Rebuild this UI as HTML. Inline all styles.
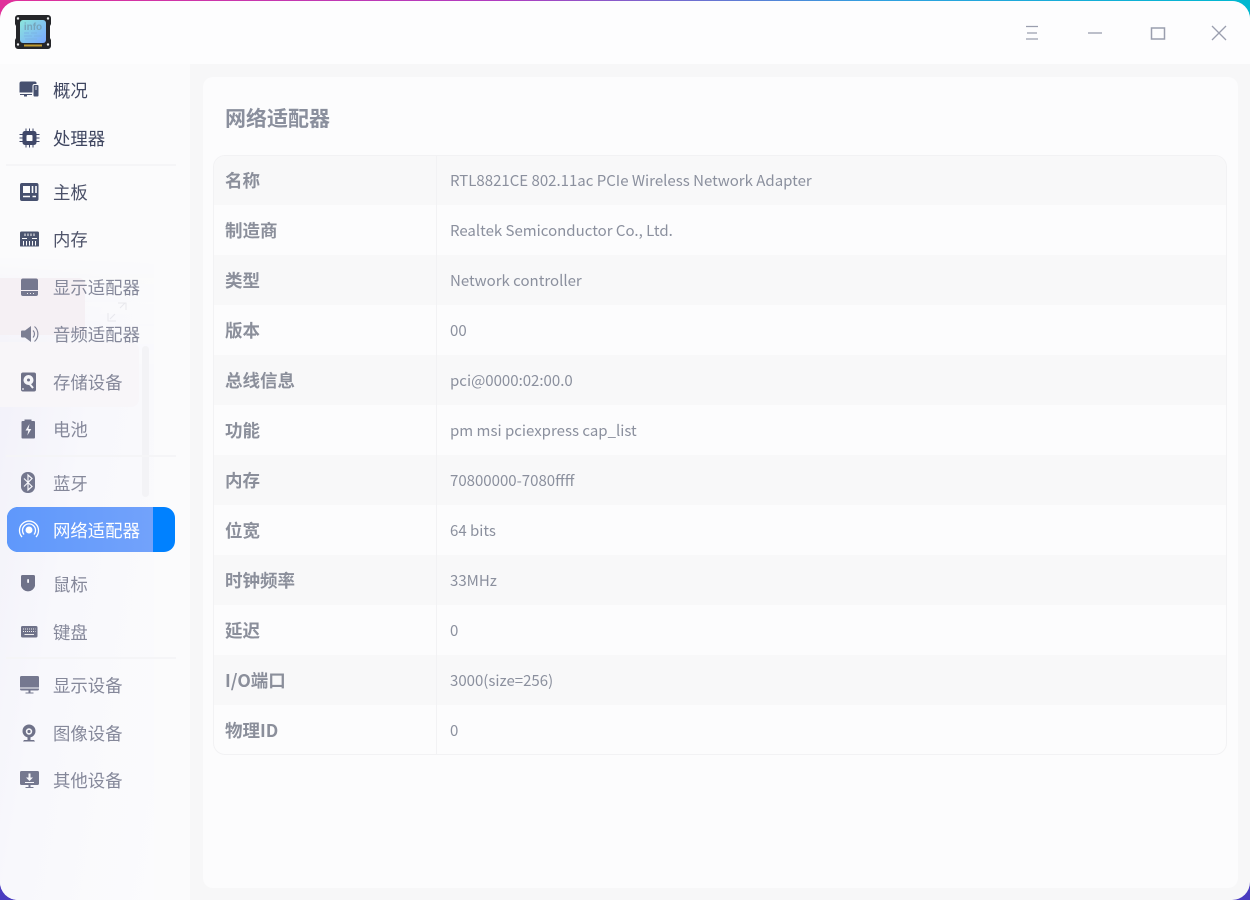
<!DOCTYPE html>
<html><head><meta charset="utf-8">
<style>
*{box-sizing:border-box;margin:0;padding:0}
html,body{width:1250px;height:900px;overflow:hidden;font-family:"Noto Sans CJK SC","Liberation Sans",sans-serif}
#bg{position:absolute;left:0;top:0;width:1250px;height:900px;background:linear-gradient(90deg,#e0309a 0%,#b03cc0 40%,#30a0e0 70%,#00b8d0 100%)}
#bg2{position:absolute;left:0;top:450px;width:1250px;height:450px;background:#4a3cc0}
#win{position:absolute;left:0;top:1px;width:1250px;height:899px;border-radius:18px;overflow:hidden;background:#f7f7f8}
#title{position:absolute;left:0;top:0;width:1250px;height:63px;background:#fdfdfe}
#side{position:absolute;left:0;top:63px;width:190px;height:836px;background:#fbfbfc}
#tint{position:absolute;left:0;top:190px;width:154px;height:646px;background:linear-gradient(100deg,#f1f0f9 0%,#f8f8fc 45%,#fbfbfd 100%);-webkit-mask-image:linear-gradient(180deg,transparent 0,#000 120px);mask-image:linear-gradient(180deg,transparent 0,#000 120px)}
#p1{position:absolute;left:0;top:214px;width:85px;height:57px;background:#f5f0f4;border-radius:0 6px 0 0}
#p2{position:absolute;left:0;top:278px;width:139px;height:65px;background:#f8f6f9;border-radius:0 8px 8px 0}
.nav{position:absolute;left:53px;font-size:17.4px;line-height:24px;white-space:nowrap;margin-top:1px}
.ic{position:absolute;left:18px;width:22px;height:22px}
.d{position:absolute;left:6px;width:170px;height:2px;background:#f5f5f7}
#sel{position:absolute;left:7px;top:507px;width:168px;height:45px;border-radius:11px;background:#0081ff;overflow:hidden}
#sel div{position:absolute;left:0;top:0;width:146px;height:45px;background:linear-gradient(90deg,#5f98fb,#72a2fb)}
#scroll{position:absolute;left:142px;top:345px;width:7px;height:151px;border-radius:4px;background:#f3f3f6}
#card{position:absolute;left:203px;top:76px;width:1035px;height:811px;border-radius:10px;background:#fcfcfd}
#h{position:absolute;left:225px;top:104px;font-size:21px;line-height:29px;font-weight:700;color:#8a8f9d}
#tb{position:absolute;left:213px;top:155px;width:1014px;height:600px;border:1px solid #f2f2f4;border-radius:12px;overflow:hidden;background:#fcfcfd}
.r{position:absolute;left:0;width:1012px;height:50px;margin-top:-1px}
.r.o{background:#f8f8f9}
.k{position:absolute;left:11px;top:13px;font-size:17.5px;line-height:26px;font-weight:700;color:#8b8f9b}
.v{position:absolute;left:236px;top:13px;font-size:15px;line-height:25px;color:#8b909e;white-space:nowrap}
#col{position:absolute;left:222px;top:0;width:1px;height:598px;background:#f2f2f4}
svg{display:block;overflow:visible}
</style></head><body>
<div id="bg"></div><div id="bg2"></div>
<div id="win">
 <div id="title"></div>
 <div id="side"><div id="tint"></div><div id="p1"></div><div id="p2"></div></div>
 <div id="scroll"></div>
 <svg style="position:absolute;left:107px;top:301px" width="20" height="20" fill="none" stroke="#e8e8ed" stroke-width="1"><path d="M11 1h8v7M13 6l5-5M1 11v8h8M3 17l5-5"/></svg>
 <div id="card"></div>
</div>

<!-- logo -->
<svg style="position:absolute;left:15px;top:15px" width="36" height="34">
 <defs><linearGradient id="lg" x1="0" y1="0" x2="1" y2="1"><stop offset="0" stop-color="#8ce6dc"/><stop offset="1" stop-color="#78a6ff"/></linearGradient></defs>
 <path d="M3 0h30a3 3 0 0 1 3 3v6l-1 2v12l1 2v6a3 3 0 0 1-3 3H3a3 3 0 0 1-3-3v-6l1-2V11L0 9V3a3 3 0 0 1 3-3z" fill="#25262a"/>
 <rect x="5" y="5" width="26" height="23" rx="3" fill="url(#lg)"/>
 <circle cx="3" cy="3.500" r="1.200" fill="#eee"/><circle cx="33" cy="3.500" r="1.200" fill="#eee"/><circle cx="3" cy="29.500" r="1.200" fill="#eee"/><circle cx="33" cy="29.500" r="1.200" fill="#eee"/>
 <rect x="9" y="29.500" width="18" height="2" fill="#c09a30"/>
 <text x="18" y="15" text-anchor="middle" font-size="10" font-weight="700" fill="#76a5bb" font-family="Liberation Sans,sans-serif">info</text>
 <path d="M9 18h5M16 18h6M9 21h8M19 21h8M10 24h12" stroke="#7ab4e4" stroke-width="1"/>
</svg>

<!-- window buttons -->
<svg style="position:absolute;left:1020px;top:20px" width="210" height="26" fill="none" stroke="#9a9eae" stroke-width="1.300">
 <path d="M6 6.500h12M7 13h10M6 19h12"/>
 <path d="M68 13h14"/>
 <rect x="131.500" y="8" width="13" height="11" stroke-width="1.500"/>
 <path d="M192 6l14 14M206 6l-14 14"/>
</svg>

<!-- nav -->
<div class="nav" style="top:78px;color:#3f4660">概况</div>
<div class="nav" style="top:126px;color:#3f4660">处理器</div>
<div class="nav" style="top:180px;color:#4a5068">主板</div>
<div class="nav" style="top:227px;color:#4f546a">内存</div>
<div class="nav" style="top:275px;color:#85889a">显示适配器</div>
<div class="nav" style="top:322px;color:#85889a">音频适配器</div>
<div class="nav" style="top:370px;color:#85889a">存储设备</div>
<div class="nav" style="top:417px;color:#85889a">电池</div>
<div class="nav" style="top:471px;color:#85889a">蓝牙</div>
<div class="nav" style="top:572px;color:#85889a">鼠标</div>
<div class="nav" style="top:620px;color:#85889a">键盘</div>
<div class="nav" style="top:673px;color:#85889a">显示设备</div>
<div class="nav" style="top:721px;color:#85889a">图像设备</div>
<div class="nav" style="top:768px;color:#85889a">其他设备</div>

<div class="d" style="top:164px"></div>
<div class="d" style="top:455px"></div>
<div class="d" style="top:657px"></div>

<div id="sel"><div></div></div>
<div class="nav" style="top:518px;color:#fff;z-index:3">网络适配器</div>

<!-- icons -->
<svg class="ic" style="top:79px" viewBox="0 0 22 22"><path d="M3.500 2.500h13a2 2 0 0 1 2 1V5h-2a2 2 0 0 0-2 2v6.500H1.500V4.500a2 2 0 0 1 2-2z" fill="#46506f"/><path d="M2 15h12v1H9v1.500H6V16H2z" fill="#46506f"/><rect x="15.500" y="6" width="5" height="11.500" rx="1" fill="#46506f"/><path d="M17 8h2M17 10h2" stroke="#fff" stroke-width=".8"/></svg>
<svg class="ic" style="top:127px" viewBox="0 0 22 22"><rect x="4.500" y="4" width="14" height="14" rx="2.500" fill="#3f4768"/><rect x="8.500" y="8" width="6" height="6" rx=".8" fill="#fcfcfd"/><path d="M8 1.500v3M11.500 1.500v3M15 1.500v3M8 17.500v3M11.500 17.500v3M15 17.500v3M1.500 7.500h3M1.500 11h3M1.500 14.500h3M18.500 7.500h3M18.500 11h3M18.500 14.500h3" stroke="#3f4768" stroke-width="1"/></svg>
<svg class="ic" style="top:181px" viewBox="0 0 22 22"><rect x="2" y="2" width="18.500" height="18" rx="2" fill="#46506f"/><rect x="5" y="5" width="7" height="7" fill="#fcfcfd"/><path d="M14.500 5v7M18 5v7" stroke="#fcfcfd" stroke-width="1.600"/><path d="M5 15.500h7M14.500 15.500h3.500" stroke="#fcfcfd" stroke-width="1.500"/></svg>
<svg class="ic" style="top:228px" viewBox="0 0 22 22"><path d="M3.500 3.500h16a1.500 1.500 0 0 1 1.500 1.500v13a.5.5 0 0 1-.5.5h-18a.5.5 0 0 1-.5-.5V5a1.500 1.500 0 0 1 1.500-1.500z" fill="#4b546f"/><path d="M7 5.500v2.500M10 5.500v2.500M13 5.500v2.500M16 5.500v2.500M5.500 13v4.500M8.500 13v4.500M11.500 13v4.500M14.500 13v4.500M17.500 13v4.500M4 10.500h5M14 10.500h5" stroke="#fcfcfd" stroke-width="1"/></svg>
<svg class="ic" style="top:276px" viewBox="0 0 22 22"><path d="M5 2.500h13a2 2 0 0 1 2 2V14H3V4.500a2 2 0 0 1 2-2z" fill="#75788f"/><path d="M3 15h17v3a2 2 0 0 1-2 2H5a2 2 0 0 1-2-2z" fill="#75788f"/><path d="M9 17.500h1M12 17.500h1M15 17.500h1" stroke="#eee" stroke-width="1"/></svg>
<svg class="ic" style="top:323px" viewBox="0 0 22 22" fill="#7c7f93"><path d="M4 7.500h3L13 3v16l-6-4.500H4a1 1 0 0 1-1-1v-5a1 1 0 0 1 1-1z"/><path d="M15 7.500a5 5 0 0 1 0 7M16.500 3.500a10 10 0 0 1 0 15" fill="none" stroke="#7c7f93" stroke-width="1.100"/></svg>
<svg class="ic" style="top:371px" viewBox="0 0 22 22"><rect x="3" y="1.500" width="15" height="19" rx="2" fill="#6f7289"/><circle cx="10.500" cy="9" r="5" fill="#f6f6fa"/><circle cx="10.500" cy="9" r="1.500" fill="#6f7289"/><path d="M10 11l5 6" stroke="#f6f6fa" stroke-width="2"/><circle cx="5" cy="18" r=".9" fill="#f6f6fa"/></svg>
<svg class="ic" style="top:418px" viewBox="0 0 22 22"><path d="M6.500 1.500h7V3H16a1 1 0 0 1 1 1v15.500a1 1 0 0 1-1 1H4.500a1 1 0 0 1-1-1V4a1 1 0 0 1 1-1h2z" fill="#6f7289"/><path d="M11.500 6l-4 6.500h2.800l-1 5 4-6.500h-2.800z" fill="#f6f6fa"/></svg>
<svg class="ic" style="top:472px" viewBox="0 0 22 22"><rect x="3" y="0" width="14" height="21" rx="6.500" fill="#74778e"/><path d="M6 6.500l8 8-4 3.500V3l4 3.500-8 8" fill="none" stroke="#f6f6fa" stroke-width="1.200"/></svg>
<svg class="ic" style="top:519px" viewBox="0 0 22 22" fill="none" stroke="#fff" stroke-width="1.300"><circle cx="11" cy="11" r="3.500" fill="#fff" stroke="none"/><path d="M6 15.500a6.500 6.500 0 1 1 10 0"/><path d="M4 18a9.500 9.500 0 1 1 14 0"/></svg>
<svg class="ic" style="top:573px" viewBox="0 0 22 22"><path d="M4.500 2h11A1.500 1.500 0 0 1 17 3.500V13a7.250 7.250 0 0 1-14 0V3.500A1.500 1.500 0 0 1 4.500 2z" fill="#6f7289"/><rect x="9.200" y="6" width="1.800" height="4" rx=".9" fill="#f6f6fa"/></svg>
<svg class="ic" style="top:621px" viewBox="0 0 22 22"><rect x="3" y="5" width="16.500" height="11.500" rx="1.500" fill="#6f7289"/><path d="M5 8h12.500M5 10.500h12.500" stroke="#eee" stroke-width="1" stroke-dasharray="1 1"/><path d="M6.500 13.500h9.500" stroke="#eee" stroke-width="1"/></svg>
<svg class="ic" style="top:674px" viewBox="0 0 22 22"><path d="M3.500 2h16A1.500 1.500 0 0 1 21 3.500V13.500H2V3.500A1.500 1.500 0 0 1 3.500 2z" fill="#75788f"/><path d="M2 14.500h19v.5a1.500 1.500 0 0 1-1.500 1.500h-16A1.500 1.500 0 0 1 2 15z" fill="#75788f"/><path d="M10.500 16.500h2v2h3v1h-8v-1h3z" fill="#75788f"/></svg>
<svg class="ic" style="top:722px" viewBox="0 0 22 22"><circle cx="11" cy="9" r="6.500" fill="#6f7289"/><circle cx="11" cy="9.500" r="3.200" fill="#f6f6fa"/><circle cx="11" cy="9.500" r="1.600" fill="#6f7289"/><path d="M6 18h10l1 1.500H5z" fill="#6f7289"/><rect x="9.500" y="15" width="3" height="3.500" fill="#6f7289"/></svg>
<svg class="ic" style="top:769px" viewBox="0 0 22 22"><path d="M3.500 2h16A1.500 1.500 0 0 1 21 3.500v11a1.500 1.500 0 0 1-1.500 1.500h-16A1.500 1.500 0 0 1 2 14.500v-11A1.500 1.500 0 0 1 3.500 2z" fill="#75788f"/><path d="M10.500 4.500h2v4H15L11.500 12 8 8.500h2.500zM7 13h9v1H7z" fill="#f6f6fa"/><path d="M10.500 16h2v2h3v1h-8v-1h3z" fill="#75788f"/></svg>

<div id="h">网络适配器</div>
<div id="tb">
 <div class="r o" style="top:0"><div class="k">名称</div><div class="v">RTL8821CE 802.11ac PCIe Wireless Network Adapter</div></div>
 <div class="r" style="top:50px"><div class="k">制造商</div><div class="v">Realtek Semiconductor Co., Ltd.</div></div>
 <div class="r o" style="top:100px"><div class="k">类型</div><div class="v">Network controller</div></div>
 <div class="r" style="top:150px"><div class="k">版本</div><div class="v">00</div></div>
 <div class="r o" style="top:200px"><div class="k">总线信息</div><div class="v">pci@0000:02:00.0</div></div>
 <div class="r" style="top:250px"><div class="k">功能</div><div class="v">pm msi pciexpress cap_list</div></div>
 <div class="r o" style="top:300px"><div class="k">内存</div><div class="v">70800000-7080ffff</div></div>
 <div class="r" style="top:350px"><div class="k">位宽</div><div class="v">64 bits</div></div>
 <div class="r o" style="top:400px"><div class="k">时钟频率</div><div class="v">33MHz</div></div>
 <div class="r" style="top:450px"><div class="k">延迟</div><div class="v">0</div></div>
 <div class="r o" style="top:500px"><div class="k">I/O端口</div><div class="v">3000(size=256)</div></div>
 <div class="r" style="top:550px"><div class="k">物理ID</div><div class="v">0</div></div>
 <div id="col"></div>
</div>
</body></html>
